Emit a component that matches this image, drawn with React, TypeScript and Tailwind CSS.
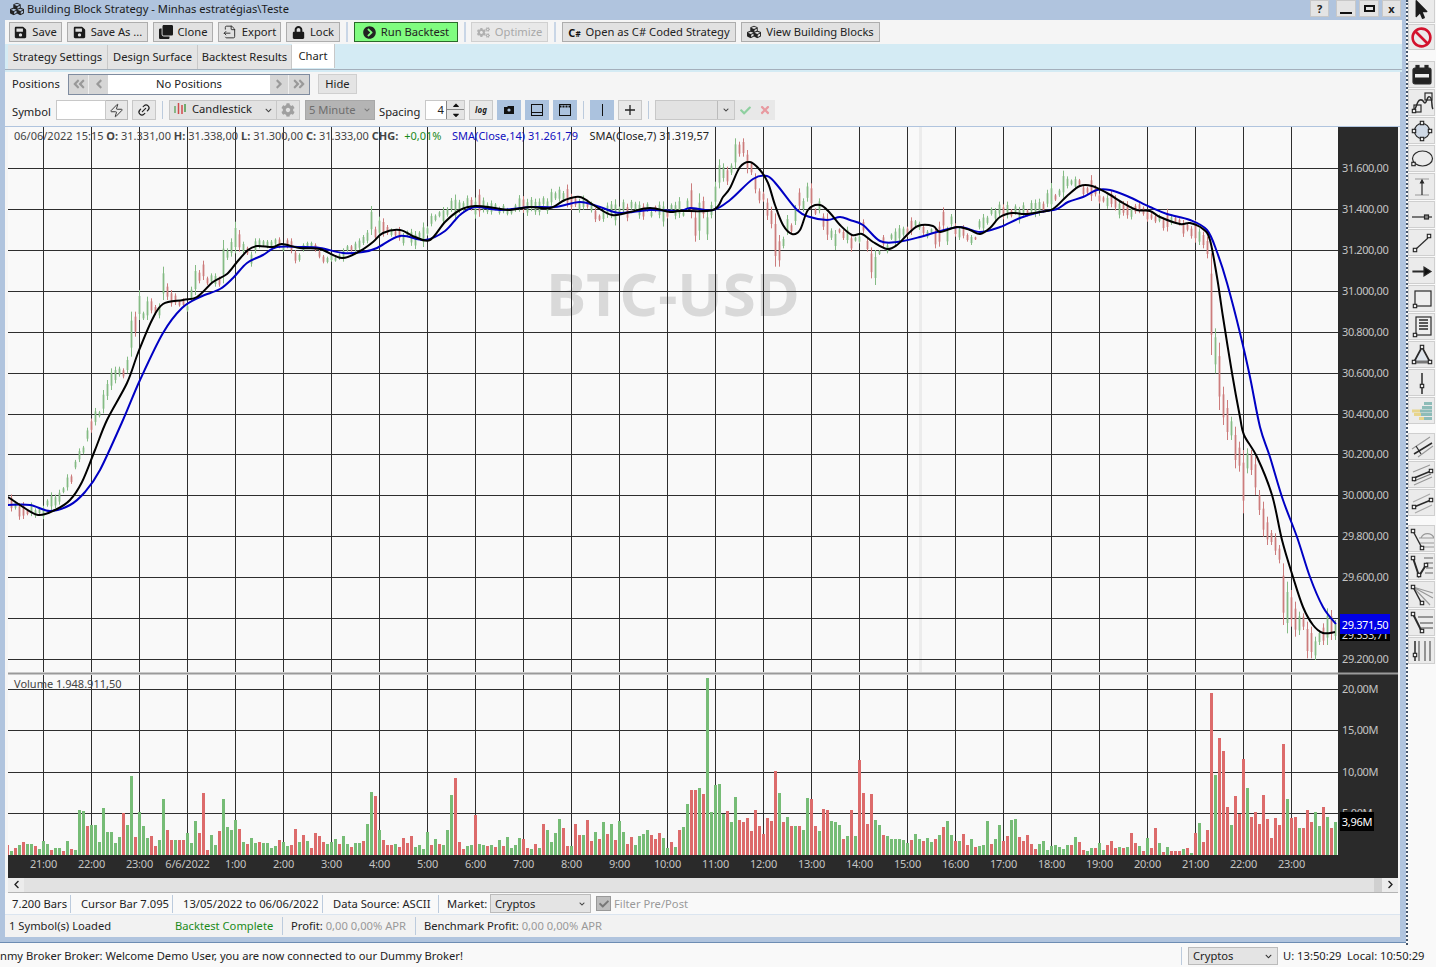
import React from "react";
import { FaSave, FaLock, FaClone, FaCog, FaCogs, FaCubes, FaChevronCircleRight, FaCheck, FaTimes, FaBan, FaMousePointer, FaChevronLeft, FaChevronRight, FaAngleDoubleLeft, FaAngleDoubleRight, FaAngleLeft, FaAngleRight, FaChevronDown, FaCaretUp, FaCaretDown } from "react-icons/fa";
import { FileOutput, Zap, Link2 } from "lucide-react";

const blackPts: number[][] = [[8,497],[20,505],[38,515],[55,510],[70,500],[82,482],[95,450],[107,420],[127,383],[138,353],[152,320],[163,304],[183,300],[197,297],[213,282],[227,274],[237,262],[248,250],[257,246],[273,247],[282,244],[300,248],[320,249],[342,258],[360,251],[373,242],[383,233],[400,230],[415,237],[430,240],[445,222],[460,210],[475,206],[495,208],[510,210],[530,207],[550,208],[565,200],[580,197],[595,206],[612,215],[630,212],[650,208],[670,212],[680,211],[713,210],[723,197],[730,188],[740,167],[750,162],[760,170],[768,183],[775,205],[783,225],[792,234],[800,230],[808,210],[820,205],[830,213],[840,225],[852,235],[862,234],[873,242],[887,249],[897,245],[907,235],[918,226],[933,226],[940,232],[957,227],[970,230],[980,234],[990,228],[1000,217],[1012,213],[1025,214],[1040,212],[1053,209],[1068,195],[1080,186],[1092,186],[1107,193],[1123,203],[1137,210],[1150,211],[1160,217],[1180,224],[1190,223],[1203,229],[1210,240],[1217,277],[1223,317],[1232,373],[1240,417],[1244,435],[1257,457],[1272,495],[1282,540],[1293,577],[1303,607],[1313,625],[1323,633],[1335,632]];
const bluePts: number[][] = [[8,505],[30,505],[50,511],[70,505],[85,492],[100,470],[123,420],[140,380],[163,333],[182,308],[200,297],[220,289],[233,278],[247,263],[263,255],[277,247],[300,247],[320,248],[343,253],[363,252],[377,248],[400,236],[425,240],[445,231],[460,215],[475,207],[500,210],[530,207],[555,207],[580,202],[600,207],[620,213],[650,210],[680,211],[690,208],[713,210],[730,200],[753,179],[767,176],[777,185],[797,210],[810,217],[827,220],[840,217],[850,220],[863,225],[880,241],[897,242],[920,237],[937,232],[960,227],[980,232],[1000,227],[1020,218],[1040,212],[1057,209],[1068,202],[1083,197],[1097,190],[1110,190],[1127,196],[1150,207],[1167,214],[1190,220],[1207,230],[1217,252],[1227,283],[1240,333],[1250,377],[1260,427],[1270,457],[1283,500],[1297,537],[1310,577],[1323,607],[1336,624]];

const smooth = (p: number[][]) => {
  let d = `M${p[0][0]} ${p[0][1]}`;
  for (let i = 0; i < p.length - 1; i++) {
    const a = p[Math.max(i - 1, 0)], b = p[i], c = p[i + 1], e = p[Math.min(i + 2, p.length - 1)];
    d += `C${(b[0] + (c[0] - a[0]) / 6).toFixed(1)} ${(b[1] + (c[1] - a[1]) / 6).toFixed(1)} ${(c[0] - (e[0] - b[0]) / 6).toFixed(1)} ${(c[1] - (e[1] - b[1]) / 6).toFixed(1)} ${c[0]} ${c[1]}`;
  }
  return d;
};
const curveAt = (p: number[][], x: number) => {
  if (x <= p[0][0]) return p[0][1];
  for (let i = 0; i < p.length - 1; i++) if (x <= p[i + 1][0]) return p[i][1] + ((p[i + 1][1] - p[i][1]) * (x - p[i][0])) / (p[i + 1][0] - p[i][0]);
  return p[p.length - 1][1];
};

type Candle = { i: number; up: boolean; top: number; bot: number };
const candles: Candle[] = [];
const known = new Set<number>();
const addCandles = (start: number, base: number, s: string) => {
  s.split(" ").forEach((t, k) => {
    const [a, b] = t.slice(1).split("-").map(Number);
    candles.push({ i: start + k, up: t[0] === "g", top: base + a / 3, bot: base + b / 3 });
    known.add(start + k);
  });
};
addCandles(24, 120, "g810-880 g780-840 g745-810 g740-790 g740-770 r745-775 g710-760 g575-710 r575-650 g510-600 g575-600 g530-600 r535-580 r555-585 g550-595 g440-540 r490-540 r510-560 r520-555 r540-560 r535-560 g555-575 g500-545 g435-525 r450-490 r422-480 r470-495 g460-490 g460-500 r470-500 g360-490 g385-420 g355-410 g305-400 r330-395 g365-400 r380-405 g395-440 g355-400 g355-385 g360-380 g360-385 g360-385 g355-375 r352-385 g375-395 r355-385 r355-400 r390-430 g400-425 g370-395 g365-385 g365-385 r370-395 r390-415 r405-430 g410-430 g400-425 g410-425 g400-420 g385-425 g375-395 r375-395 g365-395 g355-390 g345-375 g330-370 g258-345 r320-360 g290-350 r295-350 r315-345 g325-350 r330-350");
addCandles(169, 130, "g245-260 g205-240 r160-265 r245-335 g190-330 r200-265 g245-330 g215-265 g155-230 g88-175 g100-155 r110-165 g100-135 g25-115 r35-80 r25-80 r60-130 r95-135 r130-190 r175-220 r185-215 r205-270 r230-295 r250-410 r315-410 g320-355 g255-315 r280-310 g225-285 r175-240 g205-245 g158-215 r160-235 r235-255 g205-250 r250-300 r250-330 g295-330 g300-360 r295-310 r300-330 g290-340 r315-365 g320-335 g315-340 r268-310 r325-365 r352-445 g360-465 g360-375 r315-350 g340-370 g310-330 g295-345 g285-335 g290-320 r290-320 r262-315 g270-290 g275-300 r285-315 g300-325 g295-310 r295-355 r275-350 r232-300 g290-345 g252-290 r280-320 g290-330 r285-325 r310-335 g315-345 r320-330");
addCandles(297, 170, "r150-218 g175-225 r185-235 r200-265 r250-555 g475-610 r518-720 r650-765 r690-810 g740-810 r770-895 r815-905 r840-1030 g835-910 r840-915 r860-975 r960-1035 r995-1100 r1040-1125 r1080-1125 r1090-1155 r1125-1180 r1180-1365 g1235-1390 r1260-1370 r1295-1400 g1325-1395 r1330-1380 r1355-1465 r1370-1465 g1400-1470 g1380-1425 r1360-1425 g1315-1425 r1320-1410 g1350-1410");
let seed = 4711;
const rnd = () => { seed = (seed * 1664525 + 1013904223) >>> 0; return seed / 4294967296; };
for (let i = 0; i < 297; i++) {
  if (known.has(i)) continue;
  const x = 7.5 + 4 * i;
  const c = curveAt(blackPts, x + 12) + (rnd() - 0.5) * 8;
  const h = 6 + rnd() * 12 + (rnd() > 0.9 ? 10 : 0);
  const slope = curveAt(blackPts, x + 16) - curveAt(blackPts, x + 8);
  candles.push({ i, up: slope < 0 ? rnd() > 0.2 : slope > 2 ? rnd() > 0.8 : rnd() > 0.45, top: c - h * 0.55, bot: c + h * 0.45 });
}

type Vol = { i: number; up: boolean; h: number };
const vols: Vol[] = [];
const addVols = (start: number, s: string) => s.split(" ").forEach((t, k) => vols.push({ i: start + k, up: t[0] === "g", h: Number(t.slice(1)) }));
addVols(0, "r10 g4 r7 g10 r13 g11 g11 r9 g6 g14 g11 r5 g7 g7 r4 g14 r6 g5 g45 g44 r29 g30 g30 g13 g47 g23 g23 g12 g18 r42 g30 g79 r18 g43 g29 g17 r19 r9 g15 g56 r25 r15 g15 r15 r15 g22 g12 g34 r22 r62 r5 g20 g10 r24 g56 g28 g25 g35 r26 g13 r11 g17 g12 r13 g12 g12 g7 g9 r15 g13 g9 r10 r26 g13 r20 g14 r7 r22 r19 r13 g11 g13 g16 r11 g19 g11 r8 g12 g12 r14 g31 g63 r59 g25 r15 r10 r10 g11 r8");
addVols(99, "r17 r12 r19 g8 g10 g6 g23 r10 g16 r11 g10 g25 g60 r77 r13 r6 g9 g10 r40 g11 g10 r9 g10 r8 g15 r9 g18 g7 g10 g17 r16 r7 g6 r11 g7 r31 g25 g13 g22 g36 r27 r9 g9 r31 r20 g20 r35 r14 g23 r16 g33 r21 g31 r15 g34 g23 r11 r18 g10 g19 g21 g25 r20 r16 r22 g17 g7 r13 g8 r25 g28 g51 r65 r65 g67 r61 g177 g43 g70 g71 g41 r44 g33 g58 r35 r33 r37");
addVols(186, "r24 r45 r29 r21 r37 r34 r84 g62 r33 g38 r29 g29 r29 g25 g57 r56 r29 g24 r46 r45 g34 g33 g30 r16 g19 r45 g19 r95 r62 r31 r61 g35 g30 r20 g19 g16 g16 g16 g15 g12 r15 g21 g16 r14 g17 g13 r16 g20 r28 g34 g20 r14 g14 r21 r10 g16 r8 g9 g10 g34 r11 g16 g30 r14 r19 g35 g36 r18 r14 r20 r11 r6 g11 g14 g5 g9 g10 g8 g6 g10 r10 g18 r13 r5 g4 g7 r7 g12 g5 r10");
addVols(276, "r14 r7 g8 r7 g8 r22 r12 g9 r4 g17 r7 r27 g12 r3 g8 r4 r4 r4 g6 r7 g2 r22 g32 r13 r25 r162 g80 r117 r104 r48 g30 r59 r41 r96 g67 r38 r43 r31 r60 r36 r17 r37 r30 r111 g56 r37 r38 g27 r27 r45 r33 g43 g29 r48 g38 r27 g33");

const vLines = Array.from({ length: 27 }, (_, n) => 43.5 + 48 * n);
const priceLines: [number, string][] = [[168.5, "31.600,00"], [209.5, "31.400,00"], [250.5, "31.200,00"], [291.5, "31.000,00"], [332.5, "30.800,00"], [373.5, "30.600,00"], [414.5, "30.400,00"], [454.5, "30.200,00"], [495.5, "30.000,00"], [536.5, "29.800,00"], [577.5, "29.600,00"], [618.5, "29.400,00"], [659.5, "29.200,00"]];
const volLines: [number, string][] = [[689.5, "20,00M"], [730.5, "15,00M"], [772.5, "10,00M"], [813.5, "5,00M"]];
const timeLabels = ["21:00", "22:00", "23:00", "6/6/2022", ...Array.from({ length: 23 }, (_, k) => `${k + 1}:00`)];

const font = { fontFamily: "Noto Sans" };

function PricePane() {
  return (
    <svg viewBox="8 127 1390 548" className="block h-[548px] w-[1390px]">
      <rect x="8" y="127" width="1330" height="545" fill="#f9f9f9" />
      <rect x="919" y="127" width="3" height="545" fill="#ececec" />
      <text x="673" y="316" textAnchor="middle" fontSize="60" fontWeight="700" fill="#d9d9d9" style={font}>BTC-USD</text>
      {vLines.map((x) => <line key={x} x1={x} x2={x} y1="127" y2="672" stroke="#2e2e2e" strokeWidth="1" />)}
      {priceLines.map(([y]) => <line key={y} x1="8" x2="1338" y1={y} y2={y} stroke="#2e2e2e" strokeWidth="1" />)}
      {candles.map((c) => {
        const x = 7 + 4 * c.i;
        const col = c.up ? "#84bb84" : "#cc7c7c";
        const h = c.bot - c.top;
        return (
          <g key={c.i} fill={col}>
            <rect x={x} y={c.top} width="1" height={h} />
            <rect x={x - 0.5} y={c.top + h * 0.2} width="2" height={h * 0.6} opacity="0.75" />
          </g>
        );
      })}
      <path d={smooth(bluePts)} fill="none" stroke="#0000c4" strokeWidth="2" />
      <path d={smooth(blackPts)} fill="none" stroke="#000" strokeWidth="2" />
      <rect x="1338" y="127" width="60" height="548" fill="#2a2a2a" />
      {priceLines.map(([y, l]) => <text key={l} x="1342" y={y + 3.5} fontSize="11" letterSpacing="-0.4" fill="#c4c4c4" style={font}>{l}</text>)}
      <rect x="8" y="672" width="1330" height="3" fill="#f9f9f9" />
      <rect x="8" y="672.5" width="1390" height="2" fill="#9a9a9a" />
    </svg>
  );
}

function VolumePane() {
  return (
    <svg viewBox="8 675 1390 180" className="block h-[180px] w-[1390px]">
      <rect x="8" y="675" width="1330" height="180" fill="#f9f9f9" />
      {vLines.map((x) => <line key={x} x1={x} x2={x} y1="675" y2="855" stroke="#2e2e2e" strokeWidth="1" />)}
      {volLines.map(([y]) => <line key={y} x1="8" x2="1338" y1={y} y2={y} stroke="#2e2e2e" strokeWidth="1" />)}
      {vols.map((v) => <rect key={v.i} x={6 + 4 * v.i} y={855 - v.h} width="3" height={v.h} fill={v.up ? "#76bc76" : "#dc6b6b"} />)}
      <rect x="1338" y="675" width="60" height="180" fill="#2a2a2a" />
      {volLines.map(([y, l]) => <text key={l} x="1342" y={y + 3.5} fontSize="11" letterSpacing="-0.3" fill="#c4c4c4" style={font}>{l}</text>)}
    </svg>
  );
}

function TimeAxis() {
  return (
    <svg viewBox="8 855 1390 23" className="block h-[23px] w-[1390px]">
      <rect x="8" y="855" width="1390" height="23" fill="#2a2a2a" />
      {timeLabels.map((t, n) => <text key={t} x={43.5 + 48 * n} y="868" textAnchor="middle" fontSize="11" letterSpacing="-0.2" fill="#c4c4c4" style={font}>{t}</text>)}
    </svg>
  );
}

function Btn({ w, icon, children, off }: { w: string; icon?: React.ReactNode; children: React.ReactNode; off?: boolean }) {
  return (
    <div className={`flex h-5 shrink-0 items-center justify-center gap-[5px] whitespace-nowrap border ${w} ${off ? "border-[#d0d0d0] bg-[#e8e8e8] text-[#a8a8a8]" : "border-[#adadad] bg-[#e1e1e1] text-[#222]"}`}>
      {icon}
      <span>{children}</span>
    </div>
  );
}
const Sep = () => <div className="mx-px h-[20px] w-[2px] shrink-0 bg-[#c9d6e6]" />;
const VSep = () => <div className="h-[18px] w-px shrink-0 bg-[#bccbdd]" />;

function Tab({ w, children }: { w: string; children: React.ReactNode }) {
  return <div className={`flex h-[24px] items-center justify-center self-end border-r border-[#c8c8c8] bg-[#e4e4e4] whitespace-nowrap ${w}`}>{children}</div>;
}

function TIcon({ children }: { children: React.ReactNode }) {
  return <svg viewBox="0 0 24 24" className="h-[24px] w-[24px]" fill="none" stroke="#2a2a2a" strokeWidth="1.2">{children}</svg>;
}
const H = ({ x, y }: { x: number; y: number }) => <rect x={x - 1.7} y={y - 1.7} width="3.4" height="3.4" fill="#eee" stroke="#222" strokeWidth="1.1" />;

function Tool({ children, className = "" }: { children: React.ReactNode; className?: string }) {
  return <div className={`flex h-[27px] w-[27px] items-center justify-center border border-[#cfcfcf] bg-[#ebebeb] ${className}`}>{children}</div>;
}

function RightTools() {
  return (
    <div className="flex w-[30px] shrink-0 flex-col items-start border-l-2 border-dotted border-[#44556a] bg-[#f9f9f9]">
      <div className="flex h-[23px] w-[27px] items-start justify-center border border-t-0 border-[#cfcfcf] bg-[#ebebeb]"><FaMousePointer className="h-[19px] w-[19px] text-[#1c1c1c]" /></div>
      <div className="mt-px flex h-[26px] w-[27px] items-center justify-center border border-[#cfcfcf] bg-[#ebebeb]"><FaBan className="h-[21px] w-[21px] text-[#d3122d]" /></div>
      <div className="mt-[11px] flex flex-col gap-px">
        <Tool><TIcon><path d="M3 7a2 2 0 0 1 2-2h14a2 2 0 0 1 2 2v12a2 2 0 0 1-2 2H5a2 2 0 0 1-2-2z" fill="#222" /><rect x="6" y="2.5" width="3" height="4" fill="#222" /><rect x="15" y="2.5" width="3" height="4" fill="#222" /><rect x="5" y="11" width="14" height="3.5" fill="#eee" stroke="none" /></TIcon></Tool>
        <Tool><TIcon><path d="M2 20C7 20 6 10 10 9s3 3 5 3 2-8 5-6 1 10 3 12" strokeWidth="1.5" /><rect x="4" y="14" width="7" height="7" /><rect x="15" y="2" width="7" height="7" /><H x={4} y={20} /></TIcon></Tool>
        <Tool><TIcon><ellipse cx="12" cy="12" rx="7.5" ry="7.5" fill="#cfd9e6" /><H x={12} y={4} /><H x={12} y={20} /><H x={4} y={12} /><H x={20} y={12} /></TIcon></Tool>
        <Tool><TIcon><ellipse cx="12.5" cy="11.5" rx="10" ry="7.5" /><H x={3.5} y={17} /></TIcon></Tool>
        <Tool><TIcon><path d="M5 4h14M5 20h14" stroke="#999" /><path d="M12 6v14" /><path d="M10.5 8L12 5l1.500 3z" fill="#222" /></TIcon></Tool>
        <Tool><TIcon><path d="M2 14h20" /><rect x="14.500" y="12" width="4" height="4" fill="#888" /></TIcon></Tool>
        <Tool><TIcon><path d="M6 18L18 7" /><H x={5} y={19} /><H x={19} y={5} /></TIcon></Tool>
        <Tool><TIcon><path d="M3 12h11v-4l7 4.500-7 4.500v-4H3z" fill="#111" /></TIcon></Tool>
        <Tool><TIcon><rect x="5" y="4" width="16" height="15" fill="#eee" /><H x={5} y={19} /></TIcon></Tool>
        <Tool><TIcon><rect x="6" y="2" width="15" height="18" fill="#eee" /><path d="M9 5h9M9 8h9M9 11h9M9 14h9" strokeWidth="1.3" /><H x={5} y={20} /></TIcon></Tool>
        <Tool><TIcon><path d="M12 4L4 19h16z" fill="#dfe5ec" strokeWidth="1.700" /><path d="M4 19h16" stroke="#777" strokeWidth="3" /><H x={12} y={4} /><H x={4} y={19} /><H x={20} y={19} /></TIcon></Tool>
        <Tool><TIcon><path d="M12 2v21" strokeWidth="1.500" /><H x={12} y={15} /></TIcon></Tool>
        <Tool><svg viewBox="0 0 24 24" className="h-[24px] w-[24px]"><rect x="14" y="3" width="8" height="3" fill="#8dbcb8" /><rect x="12" y="7" width="10" height="3" fill="#8dbcb8" /><rect x="2" y="10.500" width="8" height="3" fill="#e8d58c" /><rect x="10" y="10.500" width="12" height="3" fill="#8dbcb8" /><rect x="4" y="14" width="7" height="3" fill="#e8d58c" /><rect x="11" y="14" width="11" height="3" fill="#8dbcb8" /><rect x="9" y="18" width="5" height="3" fill="#e8d58c" /><rect x="14" y="18" width="8" height="3" fill="#8dbcb8" /></svg></Tool>
      </div>
      <div className="mt-[9px] flex flex-col gap-px">
        <Tool><TIcon><path d="M2 14L20 2M8 22L23 11" stroke="#999" /><path d="M4 19L22 8" strokeWidth="1.5" /><path d="M6 11l5 8" strokeWidth="1.2" /></TIcon></Tool>
        <Tool><TIcon><path d="M3 9L20 2M4 22L22 14" stroke="#999" /><path d="M4 15L21 8" strokeWidth="1.500" /><path d="M4 18L21 11" stroke="#777" /><H x={4} y={16} /><H x={21} y={8} /></TIcon></Tool>
        <Tool><TIcon><path d="M3 11L20 3M5 22L22 14" stroke="#aaa" /><path d="M4 16L21 9" strokeWidth="1.500" /><H x={4} y={16} /><H x={21} y={9} /></TIcon></Tool>
      </div>
      <div className="mt-[9px] flex flex-col gap-px">
        <Tool><TIcon><path d="M11 11a7 7 0 0 1 13 0M9 11h15M10 16h14M11 20h13" stroke="#999" /><path d="M3 4l9 17" strokeWidth="1.400" /><H x={3} y={4} /><H x={12} y={21} /></TIcon></Tool>
        <Tool><TIcon><path d="M14 3h9M16 8h7M16 13h7M15 18h8" stroke="#666" /><path d="M3 3l6 18 7-11" strokeWidth="2" /><H x={3} y={3} /><H x={9} y={20} /><H x={16} y={10} /></TIcon></Tool>
        <Tool><TIcon><path d="M3 4L23 10M3 4L23 15M3 4L20 22" stroke="#999" /><path d="M3 4l9 17" strokeWidth="1.500" /><H x={3} y={4} /><H x={12} y={20} /></TIcon></Tool>
        <Tool><TIcon><path d="M8 6h15M10 12h13M11 17h12" stroke="#444" /><path d="M3 3l9 18" strokeWidth="2" /><H x={3} y={3} /><H x={12} y={20} /></TIcon></Tool>
        <Tool><TIcon><path d="M9 2v20M15 2v20M20 2v20" stroke="#777" strokeWidth="1.500" /><path d="M5 2v20" strokeWidth="1.500" /><H x={5} y={16} /></TIcon></Tool>
      </div>
    </div>
  );
}

export default function App() {
  return (
    <div className="flex h-[967px] w-[1436px] flex-col overflow-hidden bg-[#f9f9f9] font-['Noto_Sans',sans-serif] text-[11.2px] leading-none text-[#222]">
      <div className="flex h-[945px] shrink-0">
        {/* window */}
        <div className="flex h-[943px] w-[1406px] shrink-0 flex-col border-b border-[#6d8db3] bg-[#b0c4de]">
          <div className="flex h-5 shrink-0 items-center pl-[10px] pr-[5px]">
            <FaCubes className="mb-[3px] h-[14px] w-[14px] text-[#222]" />
            <span className="mb-[3px] ml-[3px] text-[11.2px] text-[#1a1a1a]">Building Block Strategy - Minhas estratégias\Teste</span>
            <div className="ml-auto flex h-[18px] items-start gap-[3px] self-start">
              <div className="mr-[4px] flex h-[17px] w-[19px] items-center justify-center border border-[#c8c8c8] bg-[#e4e4e4] text-[11px] font-bold">?</div>
              <div className="flex h-[17px] w-[20px] items-end justify-center border border-[#c8c8c8] bg-[#e4e4e4] pb-[2px]"><div className="h-[2px] w-[12px] bg-[#111]" /></div>
              <div className="flex h-[17px] w-[20px] items-center justify-center border border-[#c8c8c8] bg-[#e4e4e4]"><div className="h-[7px] w-[11px] border-2 border-[#111]" /></div>
              <div className="flex h-[17px] w-[19px] items-center justify-center border border-[#c8c8c8] bg-[#e4e4e4] text-[11px] font-bold">x</div>
            </div>
          </div>
          <div className="mb-[5px] ml-[5px] mr-[4px] flex flex-1 flex-col overflow-hidden">
            <div className="flex h-6 shrink-0 items-center gap-[5px] bg-[#f5f5f5] pl-[4px]">
              <Btn w="w-[53px]" icon={<FaSave className="h-[13px] w-[13px] text-[#1a1a1a]" />}>Save</Btn>
              <Btn w="w-[81px]" icon={<FaSave className="h-[13px] w-[13px] text-[#1a1a1a]" />}>Save As ...</Btn>
              <Btn w="w-[60px]" icon={<FaClone className="h-[14px] w-[14px] text-[#1a1a1a]" />}>Clone</Btn>
              <Btn w="w-[63px]" icon={<FileOutput className="h-[14px] w-[14px]" strokeWidth={1.5} />}>Export</Btn>
              <Btn w="w-[54px]" icon={<FaLock className="h-[13px] w-[13px] text-[#1a1a1a]" />}>Lock</Btn>
              <Sep />
              <div className="flex h-5 w-[104px] shrink-0 items-center justify-center gap-[5px] border border-[#2a6a2a] bg-[#80fc80] text-[#222]"><FaChevronCircleRight className="h-[13px] w-[13px] text-[#222]" /><span>Run Backtest</span></div>
              <Sep />
              <div className="-ml-px"><Btn off w="w-[77px]" icon={<FaCogs className="h-[13px] w-[13px] text-[#b0b0b0]" />}>Optimize</Btn></div>
              <Sep />
              <Btn w="w-[174px]" icon={<span className="text-[11px] font-bold text-[#111]">C<span className="text-[8px]">#</span></span>}>Open as C# Coded Strategy</Btn>
              <Btn w="w-[139px]" icon={<FaCubes className="h-[14px] w-[14px] text-[#222]" />}>View Building Blocks</Btn>
            </div>
            <div className="flex h-[26px] shrink-0 items-stretch border-b border-[#a4afbb] bg-[#d4ebf4] pl-[3px]">
              <Tab w="w-[100px]">Strategy Settings</Tab>
              <Tab w="w-[90px]">Design Surface</Tab>
              <Tab w="w-[94px]">Backtest Results</Tab>
              <div className="flex h-[24px] w-[43px] items-center justify-center border-r border-[#c8c8c8] bg-white">Chart</div>
            </div>
            <div className="h-[2px] shrink-0 bg-[#d4ebf4]" />
            <div className="mr-[2px] flex flex-1 flex-col bg-[#f5f5f5]">
              <div className="flex h-[27px] shrink-0 items-center pb-[3px] pl-[7px]">
                <span className="w-[56px]">Positions</span>
                <div className="flex h-[21px] w-[242px] border border-[#7f8ca0] bg-white">
                  <div className="flex w-[20px] items-center justify-center border-r border-[#eee] bg-[#d6d6d6]"><FaAngleDoubleLeft className="h-[14px] w-[14px] text-[#999]" /></div>
                  <div className="flex w-[19px] items-center justify-center bg-[#d6d6d6]"><FaAngleLeft className="h-[14px] w-[14px] text-[#999]" /></div>
                  <div className="flex flex-1 items-center justify-center">No Positions</div>
                  <div className="flex w-[19px] items-center justify-center border-r border-[#eee] bg-[#d6d6d6]"><FaAngleRight className="h-[14px] w-[14px] text-[#999]" /></div>
                  <div className="flex w-[20px] items-center justify-center bg-[#d6d6d6]"><FaAngleDoubleRight className="h-[14px] w-[14px] text-[#999]" /></div>
                </div>
                <div className="ml-[8px] flex h-5 w-[39px] items-center justify-center border border-[#cfcfcf] bg-[#e4e4e4]">Hide</div>
              </div>
              <div className="flex h-[28px] shrink-0 items-center border-b border-[#b0c4de] pb-[5px] pl-[7px]">
                <span className="w-[44px] pt-[3px]">Symbol</span>
                <div className="h-5 w-[50px] border border-[#c8c8c8] bg-white" />
                <div className="flex h-5 w-[22px] items-center justify-center border border-l-0 border-[#b8b8b8] bg-[#e8e8e8]"><Zap className="h-[15px] w-[15px]" strokeWidth={1.4} /></div>
                <div className="ml-[4px] flex h-5 w-[24px] items-center justify-center border border-[#c8c8c8] bg-[#e8e8e8]"><Link2 className="h-[14px] w-[14px] -rotate-45" strokeWidth={2} /></div>
                <div className="ml-[6px]"><VSep /></div>
                <div className="ml-[6px] flex h-5 w-[108px] items-center gap-[5px] border border-[#c8c8c8] bg-[#e2e2e2] pl-[3px]">
                  <svg viewBox="0 0 14 14" className="mb-[2px] h-[14px] w-[14px] shrink-0"><path d="M2 4v7" stroke="#6aa96a" strokeWidth="1.500" /><path d="M5.500 1v11" stroke="#d04a4a" strokeWidth="1.500" /><path d="M9 3v9" stroke="#d04a4a" strokeWidth="1.500" /><path d="M12 2v8" stroke="#4a9a4a" strokeWidth="1.500" /></svg>
                  <span className="mb-[2px]">Candlestick</span>
                  <FaChevronDown className="ml-auto mr-[4px] h-[7px] w-[7px] text-[#444]" />
                </div>
                <div className="flex h-5 w-[23px] items-center justify-center border border-l-0 border-[#c8c8c8] bg-[#e2e2e2]"><FaCog className="h-[14px] w-[14px] text-[#a0a0a0]" /></div>
                <div className="ml-[5px] flex h-5 w-[70px] items-center justify-between border border-[#a8a8a8] bg-[#b4b4b4] px-[3px] text-[#6e6e6e]"><span>5 Minute</span><FaChevronDown className="mr-[1px] h-[6px] w-[6px] text-[#777]" /></div>
                <span className="ml-[4px] w-[46px] pt-[3px]">Spacing</span>
                <div className="flex h-5 w-[40px] items-center border border-[#c8c8c8] bg-white">
                  <span className="flex-1 pr-[2px] text-right">4</span>
                  <div className="flex h-full w-[18px] flex-col border-l border-[#888] bg-[#e4e4e4]">
                    <div className="flex h-1/2 items-center justify-center border-b border-[#888]"><FaCaretUp className="h-[10px] w-[10px] text-[#111]" /></div>
                    <div className="flex h-1/2 items-center justify-center"><FaCaretDown className="h-[10px] w-[10px] text-[#111]" /></div>
                  </div>
                </div>
                <div className="ml-[4px] flex h-5 w-[24px] items-center justify-center border border-[#c8c8c8] bg-[#e8e8e8] text-[8px] font-bold italic">log</div>
                <div className="ml-[4px] flex h-5 w-[24px] items-center justify-center bg-[#abc2de]"><svg viewBox="0 0 14 14" className="h-[14px] w-[14px]"><path d="M2 4h3l1-1h6v8H2z" fill="#111" /><circle cx="7" cy="7" r="1.600" fill="#abc2de" /></svg></div>
                <div className="ml-[4px] flex h-5 w-[24px] items-center justify-center bg-[#abc2de]"><svg viewBox="0 0 14 14" className="h-[14px] w-[14px]" fill="none" stroke="#111"><rect x="1.500" y="1.500" width="11" height="11" /><path d="M1.500 9.500h11" /></svg></div>
                <div className="ml-[4px] flex h-5 w-[24px] items-center justify-center bg-[#abc2de]"><svg viewBox="0 0 14 14" className="h-[14px] w-[14px]" fill="none" stroke="#111"><rect x="1.500" y="1.500" width="11" height="11" /><path d="M1.500 3.500h11" strokeWidth="2" strokeDasharray="2 1" /></svg></div>
                <div className="ml-[6px]"><VSep /></div>
                <div className="ml-[6px] flex h-5 w-[24px] items-center justify-center bg-[#abc2de]"><div className="h-[12px] w-px bg-[#111]" /></div>
                <div className="ml-[4px] flex h-5 w-[24px] items-center justify-center border border-[#c8c8c8] bg-[#e8e8e8]"><svg viewBox="0 0 12 12" className="h-[12px] w-[12px]"><path d="M6 1v10M1 6h10" stroke="#222" strokeWidth="1.300" /></svg></div>
                <div className="ml-[6px]"><VSep /></div>
                <div className="ml-[6px] flex h-5 w-[80px] border border-[#c8c8c8] bg-[#e2e2e2]"><div className="flex-1" /><div className="flex w-[17px] items-center justify-center border-l border-[#bbb]"><FaChevronDown className="h-[6px] w-[6px] text-[#444]" /></div></div>
                <div className="flex h-5 w-[20px] items-center justify-center bg-[#e8e8e8]"><FaCheck className="h-[11px] w-[11px] text-[#8fd0a0]" /></div>
                <div className="flex h-5 w-[20px] items-center justify-center bg-[#e8e8e8]"><FaTimes className="h-[12px] w-[12px] text-[#e89aa0]" /></div>
              </div>
              <div className="relative ml-[3px] h-[750px] w-[1390px] shrink-0">
                <PricePane />
                <VolumePane />
                <TimeAxis />
                <div className="absolute left-[6px] top-[3px] whitespace-pre text-[11px] text-[#444]">
                  06/06/2022 15:15 <b>O:</b> 31.331,00 <b>H:</b> 31.338,00 <b>L:</b> 31.300,00 <b>C:</b> 31.333,00 <b>CHG:</b> <span className="ml-[3px] text-[#1a8a1a]">+0,01%</span>   <span className="ml-[2px] text-[#1010c0]">SMA(Close,14) 31.261,79</span>   <span className="ml-[3px] text-[#222]">SMA(Close,7) 31.319,57</span>
                </div>
                <div className="absolute left-[6px] top-[551px] text-[11px] text-[#444]">Volume 1.948.911,50</div>
                <div className="absolute left-[1332px] top-[493px] flex h-[21px] w-[50px] items-end justify-center overflow-hidden bg-black text-[11px] tracking-[-0.4px] text-[#ddd]"><span className="leading-[12px]">29.333,71</span></div>
                <div className="absolute left-[1332px] top-[487px] flex h-[20px] w-[50px] items-center justify-center bg-[#0000e6] text-[11px] tracking-[-0.4px] text-white">29.371,50</div>
                <div className="absolute left-[1332px] top-[685px] flex h-[19px] w-[34px] items-center justify-center bg-black text-[11px] tracking-[-0.3px] text-white">3,96M</div>
              </div>
              <div className="ml-[3px] flex h-[16px] w-[1390px] shrink-0 border-b border-[#b4b4b4] bg-[#e2e2e2]">
                <div className="flex w-[16px] items-center justify-center bg-[#ececec]"><FaChevronLeft className="h-[9px] w-[9px] text-[#222]" /></div>
                <div className="ml-auto h-full w-[8px] bg-[#d0d0d0]" />
                <div className="flex w-[16px] items-center justify-center bg-[#ececec]"><FaChevronRight className="h-[9px] w-[9px] text-[#222]" /></div>
              </div>
              <div className="flex h-[22px] shrink-0 items-center whitespace-nowrap border-b border-[#dbe5f0] bg-[#f9f9f9] pl-[7px]">
                <span className="w-[58px]">7.200 Bars</span><VSep />
                <span className="ml-[10px] w-[91px]">Cursor Bar 7.095</span><VSep />
                <span className="ml-[10px] w-[139px]">13/05/2022 to 06/06/2022</span><VSep />
                <span className="ml-[10px] w-[105px]">Data Source: ASCII</span><VSep />
                <span className="ml-[8px] w-[43px]">Market:</span>
                <div className="flex h-[19px] w-[101px] items-center border border-[#bbb] bg-[#e4e4e4] pl-[4px]"><span>Cryptos</span><FaChevronDown className="ml-auto mr-[5px] h-[6px] w-[6px] text-[#444]" /></div>
                <div className="ml-[5px] flex h-[15px] w-[15px] items-center justify-center border border-[#999] bg-[#bdbdbd]"><FaCheck className="h-[10px] w-[10px] text-[#777]" /></div>
                <span className="ml-[3px] text-[#999]">Filter Pre/Post</span>
              </div>
              <div className="flex flex-1 items-center whitespace-nowrap bg-[#f2f2f2] pl-[4px]">
                <span className="w-[166px]">1 Symbol(s) Loaded</span>
                <span className="w-[107px] text-[#1a8a1a]">Backtest Complete</span><VSep />
                <span className="ml-[8px] w-[124px]">Profit: <span className="text-[#999]">0,00 0,00% APR</span></span><VSep />
                <span className="ml-[8px]">Benchmark Profit: <span className="text-[#999]">0,00 0,00% APR</span></span>
              </div>
            </div>
          </div>
        </div>
        <RightTools />
      </div>
      <div className="flex h-[22px] shrink-0 items-center whitespace-nowrap text-[#222]">
        <span>nmy Broker Broker: Welcome Demo User, you are now connected to our Dummy Broker!</span>
        <div className="ml-auto flex items-center">
          <VSep />
          <div className="ml-[6px] flex h-[18px] w-[90px] items-center border border-[#bbb] bg-[#e4e4e4] pl-[4px]"><span>Cryptos</span><FaChevronDown className="ml-auto mr-[5px] h-[7px] w-[7px] text-[#333]" /></div>
          <span className="ml-[5px] w-[64px]">U: 13:50:29</span>
          <span className="w-[89px]">Local: 10:50:29</span>
        </div>
      </div>
    </div>
  );
}
